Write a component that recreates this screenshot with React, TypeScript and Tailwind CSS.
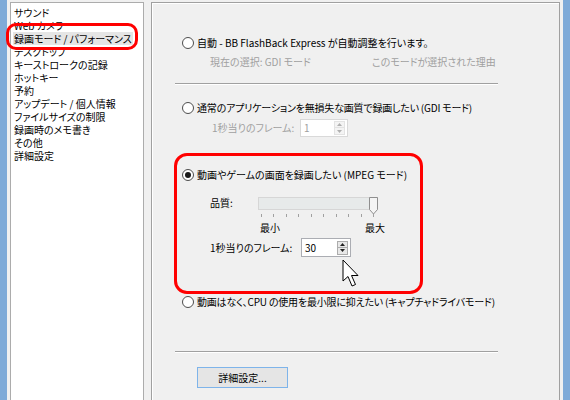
import React from 'react';

const listItems = [
  'サウンド',
  'Web カメラ',
  '録画モード / パフォーマンス',
  'デスクトップ',
  'キーストロークの記録',
  'ホットキー',
  '予約',
  'アップデート / 個人情報',
  'ファイルサイズの制限',
  '録画時のメモ書き',
  'その他',
  '詳細設定',
];

function Radio({ checked }: { checked?: boolean }) {
  return (
    <span className="w-[12px] h-[12px] rounded-full border border-[#4d4d4d] bg-white flex items-center justify-center shrink-0">
      {checked && <span className="w-[6px] h-[6px] rounded-full bg-[#1a1a1a]" />}
    </span>
  );
}

function SpinBox({ value, disabled }: { value: string; disabled?: boolean }) {
  const arrow = disabled ? '#b0b0b0' : '#222';
  return (
    <div
      className={
        disabled
          ? 'w-[48px] h-[18px] bg-white border border-[#d9d9d9] flex items-center justify-between pl-[3px] pr-[2px] text-[#a0a0a0]'
          : 'w-[50px] h-[19px] bg-white border border-[#abadb3] flex items-center justify-between pl-[3px] pr-[2px] text-black'
      }
    >
      <span>{value}</span>
      <div className="flex flex-col">
        <div className={disabled ? 'w-[11px] h-[7px] border border-[#e3e3e3] bg-[#f4f4f4] flex items-center justify-center' : 'w-[11px] h-[7px] border border-[#acacac] bg-[#e8e8e8] flex items-center justify-center'}>
          <svg width="5" height="3" viewBox="0 0 5 3"><path d="M2.5 0 L5 3 L0 3 Z" fill={arrow} /></svg>
        </div>
        <div className={disabled ? 'w-[11px] h-[7px] border border-t-0 border-[#e3e3e3] bg-[#f4f4f4] flex items-center justify-center' : 'w-[11px] h-[7px] border border-t-0 border-[#acacac] bg-[#e8e8e8] flex items-center justify-center'}>
          <svg width="5" height="3" viewBox="0 0 5 3"><path d="M0 0 L5 0 L2.5 3 Z" fill={arrow} /></svg>
        </div>
      </div>
    </div>
  );
}

function Separator() {
  return <div className="w-[323px] border-t border-[#a0a0a0] border-b border-b-white" />;
}

export default function App() {
  return (
    <div className="relative w-[570px] h-[400px] overflow-hidden bg-[#f0f0f0] flex text-[10px] text-black font-['Noto_Sans_CJK_JP','Noto_Sans',sans-serif] [font-feature-settings:'palt'] leading-[14px]">
      {/* window frame left */}
      <div className="w-[7px] h-full bg-[#7eaad8] shrink-0" />
      <div className="w-[3px] shrink-0" />

      {/* category list */}
      <div className="w-[134px] h-[420px] mt-[2px] bg-white border border-[#acacac] pt-[3px] pl-[2px] shrink-0">
        {listItems.map((item, i) => (
          <div key={item} className="h-[13px] flex items-center whitespace-nowrap">
            <span className={i === 2 ? 'inline-block h-[13px] px-[1px] bg-[#e5e5e5] leading-[13px]' : 'inline-block h-[13px] px-[1px] leading-[13px]'}>{item}</span>
          </div>
        ))}
      </div>

      <div className="w-[7px] shrink-0" />

      {/* settings group */}
      <div className="w-[409px] h-[420px] mt-[2px] border border-[#a0a0a0] shadow-[inset_1px_1px_0_#fff] pl-[23px] pt-[33px] shrink-0 flex flex-col items-start">
        <div className="ml-[7px] h-[14px] flex items-center gap-[3px] whitespace-nowrap">
          <Radio />
          <span>自動 - BB FlashBack Express が自動調整を行います。</span>
        </div>
        <div className="ml-[35px] mt-[5px] h-[14px] flex items-center text-[#a0a0a0] whitespace-nowrap">
          <span className="w-[162px]">現在の選択: GDI モード</span>
          <span>このモードが選択された理由</span>
        </div>

        <div className="mt-[14px]"><Separator /></div>

        <div className="ml-[7px] mt-[16px] h-[14px] flex items-center gap-[3px] whitespace-nowrap">
          <Radio />
          <span className="tracking-[-0.2px]">通常のアプリケーションを無損失な画質で録画したい (GDI モード)</span>
        </div>
        <div className="ml-[37px] mt-[4px] flex items-center whitespace-nowrap">
          <span className="w-[88px] text-[#a0a0a0]">1秒当りのフレーム:</span>
          <SpinBox value="1" disabled />
        </div>

        <div className="ml-[7px] mt-[31px] h-[14px] flex items-center gap-[3px] whitespace-nowrap">
          <Radio checked />
          <span>動画やゲームの画面を録画したい (MPEG モード)</span>
        </div>
        <div className="ml-[35px] mt-[14px] h-[14px] flex items-center whitespace-nowrap">
          <span className="w-[48px]">品質:</span>
          <div className="relative w-[120px] h-[13px] bg-[#e7eaea] border border-[#d6d6d6]">
            <svg className="absolute right-[-1px] top-[-1px]" width="9" height="18" viewBox="0 0 9 18">
              <path d="M0.5 0.5 H8.5 V12.5 L4.5 17 L0.5 12.5 Z" fill="#f4f4f4" stroke="#8f8f8f" />
            </svg>
          </div>
        </div>
        <div className="ml-[86px] mt-[4px] w-[113px] h-[3px] flex justify-between">
          {Array.from({ length: 10 }).map((_, i) => (
            <span key={i} className="w-[1px] h-[3px] bg-[#a0a0a0]" />
          ))}
        </div>
        <div className="ml-[85px] mt-[4px] w-[125px] h-[14px] flex items-center justify-between whitespace-nowrap">
          <span>最小</span>
          <span>最大</span>
        </div>
        <div className="ml-[35px] mt-[3px] flex items-center whitespace-nowrap">
          <span className="w-[91px]">1秒当りのフレーム:</span>
          <SpinBox value="30" />
        </div>

        <div className="ml-[7px] mt-[38px] h-[14px] flex items-center gap-[3px] whitespace-nowrap">
          <Radio />
          <span className="tracking-[-0.2px]">動画はなく、CPU の使用を最小限に抑えたい (キャプチャドライバモード)</span>
        </div>

        <div className="mt-[42px]"><Separator /></div>

        <button className="ml-[22px] mt-[14px] w-[91px] h-[21px] border border-[#7eb4ea] bg-[#e5e5e5] flex items-center justify-center">
          詳細設定...
        </button>
      </div>

      <div className="w-[3px] shrink-0" />
      {/* window frame right */}
      <div className="w-[7px] h-full bg-[#7eaad8] shrink-0" />

      {/* annotations */}
      <div className="absolute left-[6px] top-[23px] w-[132px] h-[27px] border-[3px] border-[#ff0000] rounded-[10px]" />
      <div className="absolute left-[174px] top-[153px] w-[249px] h-[141px] border-[3px] border-[#ff0000] rounded-[13px]" />

      {/* mouse cursor */}
      <svg className="absolute left-[342px] top-[259px]" width="18" height="29" viewBox="0 0 18 29">
        <path d="M1 1 L1 22 L6 17.5 L10 27 L13.5 25.5 L9.5 16.5 L16 16.5 Z" fill="#fff" stroke="#000" strokeWidth="1" strokeLinejoin="miter" />
      </svg>
    </div>
  );
}
